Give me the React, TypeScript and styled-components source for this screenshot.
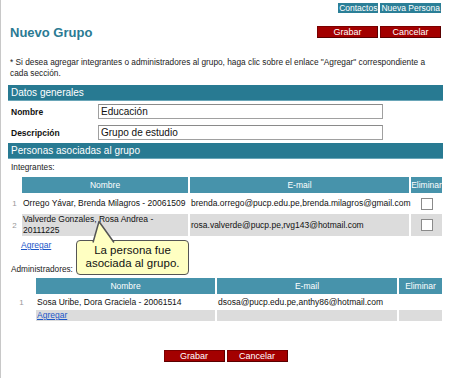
import styled, { createGlobalStyle } from "styled-components";

const GlobalStyle = createGlobalStyle`
  html, body {
    margin: 0;
    padding: 0;
    background: #fff;
  }
  body {
    font-family: "Liberation Sans", Arial, sans-serif;
    color: #222;
  }
`;

const Page = styled.div`
  width: 450px;
  height: 378px;
  box-sizing: border-box;
  border-left: 1px solid #c8c8c8;
  padding: 3px 7px 0 7px;
  position: relative;
`;

const TopLinks = styled.div`
  display: flex;
  justify-content: flex-end;
  gap: 2px;
  padding-right: 2px;
`;

const TopLink = styled.a`
  background: #2b7f97;
  color: #fff;
  font-size: 8.5px;
  line-height: 10px;
  padding: 0 1px;
  text-decoration: none;
`;

const HeaderRow = styled.div`
  display: flex;
  justify-content: space-between;
  align-items: flex-start;
  margin-top: 13px;
  padding-left: 2px;
  padding-right: 2px;
`;

const Title = styled.h1`
  margin: 1px 0 0;
  font-size: 13px;
  line-height: 12px;
  color: #2a7a93;
  font-weight: bold;
`;

const ButtonGroup = styled.div<{ $center?: boolean }>`
  display: flex;
  gap: 2px;
  justify-content: ${({ $center }) => ($center ? "center" : "flex-end")};
`;

const Button = styled.button`
  width: 61px;
  height: 12px;
  padding: 0;
  background: #a30000;
  border: 1px solid #7a0000;
  border-right-color: #5a0000;
  border-bottom-color: #5a0000;
  color: #fff;
  font-family: "Liberation Sans", Arial, sans-serif;
  font-size: 9px;
  line-height: 10px;
`;

const Note = styled.p`
  margin: 18px 0 6px;
  padding: 0 14px 0 2px;
  font-size: 8.3px;
  line-height: 11px;
  color: #222;
`;

const SectionBar = styled.div`
  background: #287a92;
  color: #fff;
  font-size: 10px;
  line-height: 15px;
  padding-left: 3px;
  border-bottom: 1px solid #6aa6b8;
`;

const FormRow = styled.div`
  display: flex;
  align-items: center;
  height: 21px;
  padding-left: 3px;
`;

const FieldLabel = styled.label`
  width: 87px;
  font-size: 8.5px;
  font-weight: bold;
  color: #111;
`;

const TextInput = styled.input`
  width: 285px;
  height: 15px;
  box-sizing: border-box;
  border: 1px solid #a0a0a0;
  border-top-color: #8a8a8a;
  padding: 0 2px;
  font-family: "Liberation Sans", Arial, sans-serif;
  font-size: 10px;
  color: #111;
`;

const SubLabel = styled.div<{ $top: number }>`
  margin-top: ${({ $top }) => $top}px;
  padding-left: 3px;
  font-size: 8.25px;
  line-height: 10px;
  color: #222;
`;

const Table = styled.table<{ $top: number }>`
  width: 437px;
  margin: ${({ $top }) => $top}px 0 0 -1px;
  table-layout: fixed;
  border-collapse: separate;
  border-spacing: 2px 2px;
  font-size: 8.5px;
  color: #111;
`;

const Th = styled.th`
  background: #4793ab;
  color: #fff;
  font-weight: normal;
  font-size: 8.5px;
  height: 16px;
  padding: 0;
  text-align: center;
  white-space: nowrap;
  overflow: hidden;
`;

const IndexTh = styled.th`
  padding: 0;
`;

const Td = styled.td<{ $gray?: boolean; $h?: number }>`
  background: ${({ $gray }) => ($gray ? "#dcdcdc" : "#fff")};
  height: ${({ $h }) => ($h ? `${$h}px` : "auto")};
  padding: 0 1px;
  line-height: 11px;
  vertical-align: middle;
  white-space: nowrap;
`;

const IndexTd = styled.td`
  color: #999;
  font-size: 8px;
  text-align: center;
  padding: 0;
`;

const CheckCell = styled(Td)`
  text-align: center;
`;

const CheckBox = styled.span`
  display: inline-block;
  width: 10px;
  height: 10px;
  border: 1px solid #8a8a8a;
  background: #fff;
  vertical-align: middle;
`;

const AddLink = styled.a`
  color: #1a56c8;
  text-decoration: underline;
  font-size: 8.5px;
`;

const AddRow = styled.div`
  padding-left: 13px;
  line-height: 10px;
`;

const Tooltip = styled.div`
  position: absolute;
  left: 75px;
  top: 240px;
  width: 113px;
  height: 35px;
  box-sizing: border-box;
  background: #ffffc2;
  border: 1.5px solid #555;
  border-radius: 4px;
  color: #111;
  font-size: 11.5px;
  line-height: 13px;
  text-align: center;
  padding-top: 3px;
`;

const TooltipTail = styled.svg`
  position: absolute;
  left: 88px;
  top: 220px;
  overflow: visible;
`;

const Footer = styled.div`
  margin-top: 27px;
`;

export default function App() {
  return (
    <>
      <GlobalStyle />
      <Page>
        <TopLinks>
          <TopLink href="#">Contactos</TopLink>
          <TopLink href="#">Nueva Persona</TopLink>
        </TopLinks>

        <HeaderRow>
          <Title>Nuevo Grupo</Title>
          <ButtonGroup>
            <Button>Grabar</Button>
            <Button>Cancelar</Button>
          </ButtonGroup>
        </HeaderRow>

        <Note>
          * Si desea agregar integrantes o administradores al grupo, haga clic
          sobre el enlace "Agregar" correspondiente a cada sección.
        </Note>

        <SectionBar>Datos generales</SectionBar>
        <FormRow>
          <FieldLabel>Nombre</FieldLabel>
          <TextInput defaultValue="Educación" />
        </FormRow>
        <FormRow>
          <FieldLabel>Descripción</FieldLabel>
          <TextInput defaultValue="Grupo de estudio" />
        </FormRow>

        <SectionBar>Personas asociadas al grupo</SectionBar>
        <SubLabel $top={4}>Integrantes:</SubLabel>
        <Table $top={2}>
          <colgroup>
            <col style={{ width: 11 }} />
            <col style={{ width: 166 }} />
            <col style={{ width: 219 }} />
            <col style={{ width: 31 }} />
          </colgroup>
          <thead>
            <tr>
              <IndexTh />
              <Th>Nombre</Th>
              <Th>E-mail</Th>
              <Th>Eliminar</Th>
            </tr>
          </thead>
          <tbody>
            <tr>
              <IndexTd>1</IndexTd>
              <Td $h={17}>Orrego Yávar, Brenda Milagros - 20061509</Td>
              <Td>brenda.orrego@pucp.edu.pe,brenda.milagros@gmail.com</Td>
              <CheckCell>
                <CheckBox />
              </CheckCell>
            </tr>
            <tr>
              <IndexTd>2</IndexTd>
              <Td $gray $h={22}>
                Valverde Gonzales, Rosa Andrea -<br />
                20111225
              </Td>
              <Td $gray>rosa.valverde@pucp.pe,rvg143@hotmail.com</Td>
              <CheckCell $gray>
                <CheckBox />
              </CheckCell>
            </tr>
          </tbody>
        </Table>
        <AddRow>
          <AddLink href="#">Agregar</AddLink>
        </AddRow>

        <SubLabel $top={15}>Administradores:</SubLabel>
        <Table $top={1}>
          <colgroup>
            <col style={{ width: 25 }} />
            <col style={{ width: 179 }} />
            <col style={{ width: 180 }} />
            <col style={{ width: 43 }} />
          </colgroup>
          <thead>
            <tr>
              <IndexTh />
              <Th>Nombre</Th>
              <Th>E-mail</Th>
              <Th>Eliminar</Th>
            </tr>
          </thead>
          <tbody>
            <tr>
              <IndexTd>1</IndexTd>
              <Td $h={12}>Sosa Uribe, Dora Graciela - 20061514</Td>
              <Td>dsosa@pucp.edu.pe,anthy86@hotmail.com</Td>
              <Td />
            </tr>
            <tr>
              <IndexTd />
              <Td $gray $h={11}>
                <AddLink href="#">Agregar</AddLink>
              </Td>
              <Td $gray />
              <Td $gray />
            </tr>
          </tbody>
        </Table>

        <Footer>
          <ButtonGroup $center>
            <Button>Grabar</Button>
            <Button>Cancelar</Button>
          </ButtonGroup>
        </Footer>

        <Tooltip>
          La persona fue
          <br />
          asociada al grupo.
        </Tooltip>
        <TooltipTail width="30" height="22" viewBox="0 0 30 22">
          <path
            d="M4 22.5 L10 1.5 L25 22.5"
            fill="#ffffc2"
            stroke="#555"
            strokeWidth="1.5"
            strokeLinejoin="round"
          />
        </TooltipTail>
      </Page>
    </>
  );
}
